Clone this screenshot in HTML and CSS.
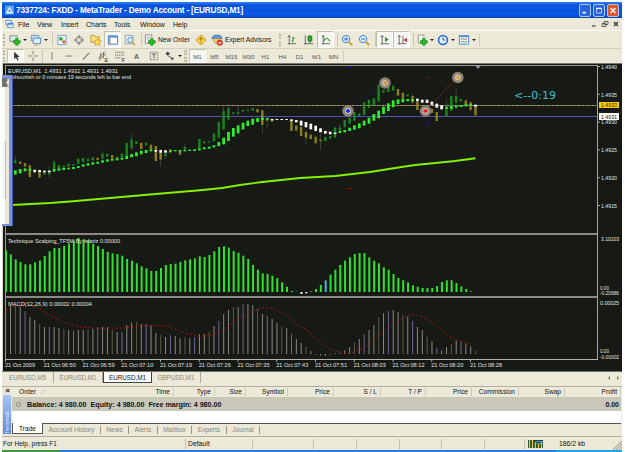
FILE: index.html
```html
<!DOCTYPE html>
<html lang="en">

<head>
    <meta charset="UTF-8">
    <title>MetaTrader</title>
    <link rel="stylesheet" href="styles.css">
</head>

<body>
    <div class="app">
        <div class="titlebar">
            <svg class="logo" viewBox="0 0 10 10"><rect width="10" height="10" fill="#5ba3e8"/><path d="M1 9L5 1l4 8z" fill="#eef6ff"/><path d="M3.5 7L5 4l1.5 3z" fill="#3b7fd0"/></svg>
            <span class="title">7337724: FXDD - MetaTrader - Demo Account - [EURUSD,M1]</span>
            <div class="win-buttons">
                <i class="wb"><svg viewBox="0 0 12 12"><path d="M3 8.5h4" stroke="#fff" stroke-width="2"/></svg></i>
                <i class="wb"><svg viewBox="0 0 12 12"><path d="M3 3.5h6v5.5H3z" fill="none" stroke="#cfe0ff"/><path d="M3 3.5h6" stroke="#fff" stroke-width="1.5"/></svg></i>
                <i class="wb close"><svg viewBox="0 0 12 12"><path d="M3 3l6 6M9 3l-6 6" stroke="#fff" stroke-width="1.6"/></svg></i>
            </div>
        </div>

        <div class="menubar">
            <svg class="menu-icon" viewBox="0 0 10 10"><path d="M1 1h6v5H1zM3 4h6v5H3z" fill="#fff" stroke="#4a8ad8"/><path d="M3 4.5h6" stroke="#4a8ad8" stroke-width="1.5"/></svg>
            <span class="m-file">File</span><span class="m-view">View</span><span class="m-insert">Insert</span><span class="m-charts">Charts</span><span class="m-tools">Tools</span><span class="m-window">Window</span><span>Help</span>
            <div class="mdi-buttons">
                <svg viewBox="0 0 8 8"><path d="M2 6h3.5" stroke="#444" stroke-width="1.3"/></svg>
                <svg viewBox="0 0 8 8"><path d="M3 1.5h4v3H3zM1 3.5h4v3H1z" fill="#ece9d8" stroke="#555" stroke-width=".9"/></svg>
                <svg viewBox="0 0 8 8"><path d="M2 2l4 4M6 2L2 6" stroke="#333" stroke-width="1.2"/></svg>
            </div>
        </div>

        <div class="toolbar main-tools">
            <i class="grip"></i>
            <div class="btn drop"><svg viewBox="0 0 13 13"><path d="M1 2h8v6H1z" fill="#dcebe0" stroke="#6b8f87"/><path d="M8.5 4.5v8M4.5 8.5h8" stroke="#169616" stroke-width="3.4"/><path d="M8.5 5.5v6M5.5 8.5h6" stroke="#31d531"/></svg><b></b></div>
            <div class="btn drop"><svg viewBox="0 0 13 13"><path d="M1.5 1.5h8v6h-8z" fill="#c9def5" stroke="#6b98c8"/><path d="M3.5 4.5h8v6h-8z" fill="#e2effc" stroke="#4f86c4"/><path d="M5 12h4" stroke="#d7a63c"/></svg><b></b></div>
            <i class="sep"></i>
            <div class="btn"><svg viewBox="0 0 13 13"><path d="M2 1.5h9v10H2z" fill="#eef6ff" stroke="#74a3cf"/><path d="M3.5 3.5H7V7H3.5z" fill="#22a822"/><path d="M7 7h3v3H7z" fill="#e0542a"/></svg></div>
            <div class="btn"><svg viewBox="0 0 13 13"><circle cx="6.5" cy="6.5" r="3.5" fill="none" stroke="#777"/><path d="M6.5 1v4M6.5 8v4M1 6.5h4M8 6.5h4" stroke="#666"/></svg></div>
            <div class="btn"><svg viewBox="0 0 13 13"><path d="M1 3V1.5h4l1 1.5h4v6H1z" fill="#f7df83" stroke="#c59a31"/><path d="M8 5l1.4 2.4 2.8.3-2 1.9.5 2.8L8 11l-2.4 1.4.5-2.8-2-1.9 2.7-.3z" fill="#ffe24d" stroke="#cc9a20" stroke-width=".8"/></svg></div>
            <div class="btn pressed"><svg viewBox="0 0 13 13"><path d="M1.5 2h10v9h-10z" fill="#fff" stroke="#3c76bb"/><path d="M2 3h9" stroke="#5a95d8" stroke-width="2"/><path d="M3 4v7" stroke="#d05050"/></svg></div>
            <div class="btn"><svg viewBox="0 0 13 13"><path d="M1.5 1.5h8v9h-8z" fill="#e8eef5" stroke="#8ca6c2"/><circle cx="7" cy="6.5" r="3" fill="#cfe7fa" stroke="#648bb5"/><path d="M9 9l3 3" stroke="#d1a53b" stroke-width="2"/></svg></div>
            <i class="sep"></i>
            <div class="btn order"><svg viewBox="0 0 13 13"><path d="M1.5 1h7v9h-7z" fill="#fff" stroke="#888"/><path d="M3 3.5h4M3 5.5h3" stroke="#999"/><path d="M8.5 4.5v8M4.5 8.5h8" stroke="#169616" stroke-width="3.4"/><path d="M8.5 5.5v6M5.5 8.5h6" stroke="#31d531"/></svg><span>New Order</span></div>
            <div class="btn"><svg viewBox="0 0 13 13"><path d="M6.5 1L12 6.5 6.5 12 1 6.5z" fill="#ffd84c" stroke="#cc951c"/><path d="M6.5 3.5v4M6.5 8.5v1.5M4.5 6l2-2 2 2" stroke="#8a5d06" fill="none"/></svg></div>
            <div class="btn experts"><svg viewBox="0 0 13 13"><path d="M1 5c0-5 11-5 11 0z" fill="#5b9ee0" stroke="#3572b4"/><path d="M3 5h7v3c-1 3-6 3-7 0z" fill="#f5cf72" stroke="#b1843a" stroke-width=".7"/><circle cx="9.5" cy="9.5" r="3.3" fill="#dd3428"/><path d="M8 9.5h3" stroke="#fff" stroke-width="1.4"/></svg><span>Expert Advisors</span></div>
            <i class="grip"></i>
            <div class="btn"><svg viewBox="0 0 13 13"><path d="M3.5 1.5v10M2 10.5h9M2 3.5l1.5-2L5 3.5" fill="none" stroke="#666"/><path d="M7.5 3v6M7.5 4.5h2M6 7.5h1.5" stroke="#228a22"/></svg></div>
            <div class="btn"><svg viewBox="0 0 13 13"><path d="M2.5 1.5v10M1 10.5h10" stroke="#666"/><path d="M7.5 1v9" stroke="#187318"/><path d="M5.5 2.5h4v5h-4z" fill="#2bb62b" stroke="#187318"/></svg></div>
            <div class="btn pressed"><svg viewBox="0 0 13 13"><path d="M3.5 1.5v10M2 10.5h9M2 3.5l1.5-2L5 3.5" fill="none" stroke="#666"/><path d="M4 8c2-5 4-4 7 0" fill="none" stroke="#2a9a2a" stroke-width="1.2"/></svg></div>
            <i class="sep"></i>
            <div class="btn"><svg viewBox="0 0 13 13"><circle cx="5.5" cy="5.5" r="4" fill="#dbefff" stroke="#3b7cc4"/><path d="M3.5 5.5h4M5.5 3.5v4" stroke="#2462b5"/><path d="M8.5 8.5L12 12" stroke="#cf9e2a" stroke-width="2.2"/></svg></div>
            <div class="btn"><svg viewBox="0 0 13 13"><circle cx="5.5" cy="5.5" r="4" fill="#dbefff" stroke="#3b7cc4"/><path d="M3.5 5.5h4" stroke="#2462b5"/><path d="M8.5 8.5L12 12" stroke="#cf9e2a" stroke-width="2.2"/></svg></div>
            <i class="sep"></i>
            <div class="btn pressed"><svg viewBox="0 0 13 13"><path d="M3.5 1.5v10M2 10.5h9M2 3.5l1.5-2L5 3.5" fill="none" stroke="#666"/><path d="M6.5 3l4 3-4 3z" fill="#2a9a2a"/></svg></div>
            <div class="btn pressed"><svg viewBox="0 0 13 13"><path d="M3.5 1.5v10M2 10.5h9M2 3.5l1.5-2L5 3.5M7.5 2v8" fill="none" stroke="#666"/><path d="M12 4L8 6.5 12 9z" fill="#c23b26"/></svg></div>
            <i class="sep"></i>
            <div class="btn drop"><svg viewBox="0 0 13 13"><path d="M2.5 1h6v9h-6z" fill="#f7f7f2" stroke="#999"/><path d="M8.5 4.5v8M4.5 8.5h8" stroke="#169616" stroke-width="3.4"/><path d="M8.5 5.5v6M5.5 8.5h6" stroke="#31d531"/></svg><b></b></div>
            <div class="btn drop"><svg viewBox="0 0 13 13"><circle cx="6.5" cy="6.5" r="4.8" fill="#e4f1ff" stroke="#2768c5" stroke-width="1.7"/><path d="M6.5 3.5v3h2.5" fill="none" stroke="#2a5390"/></svg><b></b></div>
            <div class="btn drop"><svg viewBox="0 0 13 13"><path d="M1.5 2h10v9h-10z" fill="#f6fbff" stroke="#4f8ccb"/><path d="M1 2.5h11" stroke="#4f8ccb" stroke-width="2"/><path d="M3 6l2-1 2 1 3-1" stroke="#c24848" fill="none"/><path d="M3 9l2-1 2 1 3-1" stroke="#3a9a3a" fill="none"/></svg><b></b></div>
            <i class="toolbar-end"></i>
        </div>

        <div class="toolbar line-tools">
            <i class="grip"></i>
            <div class="btn pressed"><svg viewBox="0 0 13 13"><path d="M4.5 2v8l2-2 1.5 3.5 1.2-.6L8 7.5h2.5z" fill="#333"/></svg></div>
            <div class="btn"><svg viewBox="0 0 13 13"><path d="M6.5 1v4M6.5 8v4M1 6.5h4M8 6.5h4" stroke="#777"/></svg></div>
            <i class="sep"></i>
            <div class="btn"><svg viewBox="0 0 13 13"><path d="M6.5 2.5v8" stroke="#777"/></svg></div>
            <div class="btn"><svg viewBox="0 0 13 13"><path d="M2.5 6.5h8" stroke="#777"/></svg></div>
            <div class="btn"><svg viewBox="0 0 13 13"><path d="M3 10.5L10 3" stroke="#777" stroke-width="1.2"/></svg></div>
            <div class="btn"><svg viewBox="0 0 13 13"><path d="M1 9l8-7M2 11l8-7M4 3v7M7 2v7" stroke="#666" stroke-width=".9"/><text x="8" y="12.5" font-size="6" fill="#222">E</text></svg></div>
            <div class="btn"><svg viewBox="0 0 13 13"><path d="M1 2.5h10M1 5.5h10M1 8.5h7" stroke="#666" stroke-dasharray="1.5 .7"/><text x="8.5" y="13" font-size="6" fill="#222">F</text></svg></div>
            <div class="btn"><span class="letter">A</span></div>
            <div class="btn"><svg viewBox="0 0 13 13"><path d="M2.5 2.5h8v8h-8z" fill="none" stroke="#777" stroke-dasharray="1.5 .7"/><path d="M4.5 4.5h4M6.5 4.5V9" stroke="#555"/></svg></div>
            <div class="btn drop"><svg viewBox="0 0 13 13"><path d="M1.5 4L4 1.5 6.5 4 4 6zM7 8.5h4L9 11.5z" fill="#444"/><path d="M4 6l5 3" stroke="#555"/></svg><b></b></div>
            <i class="toolbar-end"></i>
            <i class="grip"></i>
            <div class="btn period pressed">M1</div>
            <div class="btn period">M5</div>
            <div class="btn period">M15</div>
            <div class="btn period">M30</div>
            <div class="btn period">H1</div>
            <div class="btn period">H4</div>
            <div class="btn period">D1</div>
            <div class="btn period">W1</div>
            <div class="btn period">MN</div>
            <i class="toolbar-end"></i>
        </div>

        <div class="chart-wrap">
            <svg class="chart" id="chart" viewBox="2 63 620 308"></svg>
            <div class="side-window">
                <div class="side-body"><i class="side-close"></i><i class="side-list"></i></div>
            </div>
        </div>

        <div class="chart-tabs">
            <span class="ctab">EURUSD,M5</span><span class="ctab">EURUSD,M1</span><span class="ctab active">EURUSD,M1</span><span class="ctab">GBPUSD,M1</span>
            <div class="tab-arrows"><i class="left"></i><i class="right"></i></div>
        </div>

        <div class="terminal">
            <div class="terminal-side">
                <span class="terminal-close">×</span>
                <span class="terminal-name">Terminal</span>
            </div>
            <div class="terminal-main">
                <div class="cols header">
                    <span class="first">Order<em>∕</em></span><span>Time</span><span>Type</span><span>Size</span><span>Symbol</span><span>Price</span><span>S / L</span><span>T / P</span><span>Price</span><span>Commission</span><span>Swap</span><span>Profit</span>
                </div>
                <div class="balance">
                    <i class="dot"></i>
                    <span class="balance-text">Balance: 4 980.00&nbsp; Equity: 4 980.00&nbsp; Free margin: 4 980.00</span>
                    <span class="profit">0.00</span>
                </div>
                <div class="blank"></div>
                <div class="term-tabs">
                    <span class="ttab active">Trade</span><span class="ttab history">Account History</span><span class="ttab news">News</span><span class="ttab alerts">Alerts</span><span class="ttab mailbox">Mailbox</span><span class="ttab exp">Experts</span><span class="ttab journal">Journal</span>
                </div>
            </div>
        </div>

        <div class="statusbar">
            <span class="help">For Help, press F1</span>
            <span>Default</span>
            <span></span><span></span><span></span><span></span><span></span><span></span>
            <span class="traffic">
                <svg viewBox="0 0 15 8"><rect width="15" height="8" fill="#23452c"/><path d="M1.5 0v8M4.5 0v8M7.5 2v6M10.5 4v4M13.5 1v7" stroke="#d6cf53" stroke-width="1.3"/><path d="M8 1.5h7M9 3.5h4" stroke="#4f8fd5"/></svg>
                186/2 kb
            </span>
            <svg class="resize" viewBox="0 0 9 9"><path d="M0 9l9-9M3 9l6-6M6 9l3-3" stroke="#aaa797" stroke-width="1.2"/></svg>
        </div>
        <div class="taskbar"><i class="start"></i><i class="tray"></i></div>
    </div>

    <script src="chart.js"></script>
</body>

</html>
```

FILE: styles.css
```css
* {
    box-sizing: border-box;
}

body {
    margin: 0;
    padding: 2px 3px 0 2px;
    height: 452px;
    overflow: hidden;
    background-color: #fff;
    font-family: "Liberation Sans", Arial, sans-serif;
    font-size: 7px;
    color: #111;
}

i {
    display: block;
}

svg {
    display: block;
}

.app {
    width: 620px;
    height: 450px;
    display: flex;
    flex-direction: column;
    background-color: #ece9d8;
}

/* title */
.titlebar {
    height: 16px;
    display: flex;
    align-items: center;
    background: linear-gradient(#2f83f5, #0a52dc 20%, #0a58e4 80%, #0641b5);
    padding: 0 3px;
}

.logo {
    width: 9px;
    height: 10px;
}

.title {
    margin-left: 2px;
    color: #fff;
    font-size: 8.2px;
    font-weight: bold;
    letter-spacing: -0.16px;
    white-space: nowrap;
}

.win-buttons {
    margin-left: auto;
    display: flex;
    gap: 2px;
}

.wb {
    width: 12px;
    height: 13px;
    border: 1px solid #a9c6f7;
    border-radius: 2px;
    background-color: #2c63dd;
}

.wb.close {
    background-color: #df5528;
}

.wb svg {
    width: 10px;
    height: 11px;
}

/* menu */
.menubar {
    height: 13px;
    display: flex;
    align-items: center;
    padding-left: 3px;
    border-bottom: 1px solid #fbfaf5;
}

.menu-icon {
    width: 9px;
    height: 10px;
    margin-right: 4px;
}

.m-file {
    width: 19px;
}

.m-view {
    width: 24px;
}

.m-insert {
    width: 25px;
}

.m-charts {
    width: 28px;
}

.m-tools {
    width: 26px;
}

.m-window {
    width: 33px;
}

.mdi-buttons {
    margin-left: auto;
    display: flex;
    gap: 3px;
    padding-right: 2px;
}

.mdi-buttons svg {
    width: 8px;
    height: 8px;
}

/* toolbars */
.toolbar {
    display: flex;
    align-items: center;
    padding-left: 1px;
}

.main-tools {
    height: 17px;
}

.line-tools {
    height: 15px;
    border-top: 1px solid #d5d1bf;
}

.grip {
    width: 3px;
    height: 12px;
    margin-right: 1px;
    border-left: 2px dotted #bbb7a6;
}

.btn {
    width: 17px;
    height: 100%;
    display: flex;
    align-items: center;
    justify-content: center;
    white-space: nowrap;
}

.btn svg {
    width: 12px;
    height: 12px;
    flex: none;
}

.drop {
    width: 21px;
}

.drop b {
    margin-left: 2px;
    border: 2px solid transparent;
    border-top-color: #222;
    border-bottom: 0;
}

.pressed {
    background-color: #f7f6f0;
    border: 1px solid #c3bfae;
    border-right-color: #fff;
    border-bottom-color: #fff;
}

.sep {
    width: 4px;
    height: 13px;
    border-right: 1px solid #c9c5b4;
}

.order {
    width: 50px;
    justify-content: flex-start;
    padding-left: 2px;
}

.order span,
.experts span {
    margin-left: 2px;
}

.order span {
    font-size: 6.6px;
}

.experts {
    width: 66px;
    justify-content: flex-start;
    padding-left: 2px;
    margin-right: 4px;
    font-size: 6.7px;
}

.toolbar-end {
    width: 3px;
    height: 12px;
    border-right: 1px solid #d1cdbb;
}

.line-tools .sep,
.line-tools .toolbar-end {
    width: 2px;
}

.letter {
    font-weight: bold;
    color: #666;
}

.period {
    color: #555;
    font-size: 6.2px;
}

/* chart */
.chart-wrap {
    position: relative;
    height: 308px;
    background-color: #161914;
}

.chart {
    width: 620px;
    height: 308px;
    font-family: "Liberation Sans", Arial, sans-serif;
}

.side-window {
    position: absolute;
    left: 0;
    top: 12px;
    width: 11px;
    height: 151px;
    padding: 3px 3px 2px 0;
    background-color: #7c90e0;
    border-right: 1px solid #4255a6;
}

.side-body {
    height: 100%;
    background: linear-gradient(90deg, #fff 50%, #ece9d8 50%);
}

.side-close {
    height: 9px;
    background: #75706a;
    border-right: 2px solid #aaa59e;
    clip-path: polygon(0 0, 100% 0, 60% 50%, 100% 100%, 0 100%);
}

.side-list {
    width: 4px;
    height: 58px;
    margin-top: 54px;
    border-right: 1px solid #9fc0e0;
    background-color: #f1f5f6;
}

/* tabs under the chart */
.chart-tabs {
    height: 15px;
    display: flex;
    align-items: flex-start;
    border-top: 1px solid #77746a;
    color: #8a8779;
}

.ctab {
    width: 49px;
    height: 11px;
    line-height: 11px;
    text-align: center;
    font-size: 6.3px;
    border-right: 1px solid #aaa797;
}

.ctab:first-child {
    width: 52px;
}

.ctab.active {
    background-color: #fff;
    color: #111;
    border: 1px solid #444;
    border-top: 0;
}

.tab-arrows {
    margin-left: auto;
    display: flex;
    gap: 7px;
    padding: 4px 3px 0 0;
}

.tab-arrows i {
    border: 2px solid transparent;
}

.tab-arrows .left {
    border-right-color: #77746a;
    border-left: 0;
}

.tab-arrows .right {
    border-left-color: #77746a;
    border-right: 0;
}

/* terminal */
.terminal {
    height: 50px;
    display: flex;
    border-top: 1px solid #b4b09f;
}

.terminal-side {
    width: 10px;
    padding-left: 1px;
    display: flex;
    flex-direction: column;
}

.terminal-close {
    height: 8px;
    line-height: 7px;
    font-size: 8px;
    font-weight: bold;
    text-align: center;
}

.terminal-name {
    width: 8px;
    height: 39px;
    background: linear-gradient(#5c86d8, #a6c4f5);
    color: #e6effd;
    font-size: 6px;
    line-height: 8px;
    writing-mode: vertical-rl;
    transform: rotate(180deg);
    text-align: left;
}

.terminal-main {
    flex: 1;
    padding-right: 1px;
}

.cols {
    display: grid;
    grid-template-columns: 59px 103px 41px 31px 42px 46px 47px 45px 46px 47px 46px 56px;
}

.header {
    height: 11px;
    align-items: center;
    border-bottom: 1px solid #cbc7b5;
}

.header span {
    text-align: right;
    padding-right: 3px;
    border-right: 1px solid #cdc9b8;
    line-height: 8px;
    font-size: 6.6px;
    white-space: nowrap;
}

.header .first {
    text-align: left;
    padding-left: 7px;
    border-right: 0;
}

.header em {
    color: #999;
    margin-left: 7px;
}

.balance {
    height: 13px;
    display: flex;
    align-items: center;
    background-color: #c9c7ba;
    font-weight: bold;
    padding: 0 2px 0 4px;
}

.dot {
    width: 5px;
    height: 5px;
    border: 1px solid #8a8779;
    border-radius: 50%;
}

.balance-text {
    margin-left: 6px;
    font-size: 7.15px;
    white-space: nowrap;
}

.profit {
    margin-left: auto;
}

.blank {
    height: 12px;
    background-color: #fff;
}

.term-tabs {
    height: 12px;
    display: flex;
    border-top: 1px solid #555;
    color: #8a8779;
}

.ttab {
    height: 8px;
    margin-top: 2px;
    line-height: 8px;
    text-align: center;
    border-right: 1px solid #999686;
    font-size: 6.6px;
    white-space: nowrap;
}

.ttab.active {
    width: 31px;
    height: 11px;
    margin-top: -1px;
    line-height: 12px;
    background-color: #fff;
    color: #111;
    border: 1px solid #555;
    border-top: 0;
}

.history {
    width: 58px;
}

.news {
    width: 28px;
}

.alerts {
    width: 29px;
}

.mailbox {
    width: 34px;
}

.exp {
    width: 35px;
}

.journal {
    width: 33px;
}

/* status */
.statusbar {
    height: 14px;
    display: grid;
    grid-template-columns: 184px 67px 61px 43px 43px 42px 43px 40px 1fr 9px;
    align-items: center;
    border-top: 1px solid #b4b09f;
}

.statusbar span {
    height: 10px;
    line-height: 10px;
    padding-left: 2px;
    border-right: 1px solid #c5c1b0;
    white-space: nowrap;
    font-size: 6.8px;
}

.statusbar .help {
    padding-left: 1px;
    font-size: 6.5px;
}

.statusbar .traffic {
    display: flex;
    align-items: center;
    gap: 16px;
    border-right: 0;
    padding-left: 3px;
}

.traffic svg {
    width: 15px;
    height: 8px;
}

.resize {
    width: 9px;
    height: 9px;
    align-self: end;
}

.taskbar {
    height: 2px;
    display: flex;
    justify-content: space-between;
    background-color: #2f7be6;
}

.start {
    width: 57px;
    background-color: #43983f;
}

.tray {
    width: 66px;
    background-color: #18a5ee;
}
```

FILE: chart.js
```javascript
const chart = document.getElementById('chart');
const STEP = 4.844;
let out = '';

function rect(x, y, w, h, fill) {
    out += `<rect x="${x.toFixed(2)}" y="${y.toFixed(2)}" width="${w}" height="${h.toFixed(2)}" fill="${fill}"/>`;
}

function line(x1, y1, x2, y2, color, extra = '') {
    out += `<line x1="${x1}" y1="${y1}" x2="${x2}" y2="${y2}" stroke="${color}" ${extra}/>`;
}

function text(x, y, str, len, color = '#e4e4e4', size = 6) {
    out += `<text x="${x}" y="${y}" font-size="${size}" fill="${color}" textLength="${len}" lengthAdjust="spacingAndGlyphs">${str}</text>`;
}

// panels
rect(2, 63, 620, 308, '#161914');
rect(2, 63, 1, 308, '#d8d5c6');
rect(3, 63, 619, 1, '#77766f');
rect(5, 65, 593, 1, '#9a9a94');
rect(5, 233, 593, 2, '#8b8984');
rect(5, 296, 593, 2, '#8b8984');
rect(5, 65, 1, 294, '#9a9a94');
rect(597, 65, 1, 294, '#a5a5a0');
rect(5, 359, 593, 1, '#b5b5b0');

// bid and ask
line(12, 105.5, 597, 105.5, '#a3966a', 'stroke-dasharray="2 .5"');
line(12, 116.5, 597, 116.5, '#5252b4');

// candles: index, top, bottom (thirds of a pixel from y=62), 1 = bullish
const candles = [
    [0, 295, 303, 1], [1, 299, 306, 0], [2, 303, 314, 0], [3, 310, 345, 0], [4, 322, 330, 0], [5, 326, 346, 0],
    [6, 332, 338, 1], [7, 333, 337, 1], [8, 300, 321, 1], [9, 309, 318, 1], [10, 311, 317, 1], [11, 305, 313, 1],
    [12, 306, 311, 1], [13, 290, 306, 1], [14, 288, 300, 1], [15, 290, 298, 1], [16, 286, 295, 1], [17, 287, 294, 0],
    [18, 275, 290, 1], [19, 275, 284, 1], [20, 279, 290, 0], [21, 285, 289, 0], [22, 275, 285, 1], [23, 243, 286, 1],
    [24, 232, 259, 1], [25, 238, 246, 1], [26, 243, 261, 0], [27, 242, 250, 1], [28, 248, 262, 0], [29, 252, 297, 0],
    [30, 270, 293, 0], [31, 274, 282, 1], [32, 262, 272, 0], [34, 265, 278, 0], [35, 255, 263, 1], [38, 231, 261, 1],
    [39, 238, 244, 1], [40, 238, 242, 1], [41, 214, 238, 1], [42, 180, 227, 1], [43, 147, 202, 1], [44, 139, 173, 1],
    [45, 151, 156, 1], [46, 150, 155, 1], [47, 144, 149, 1], [48, 143, 147, 1], [49, 138, 146, 1], [50, 141, 151, 0],
    [51, 145, 189, 0], [52, 172, 176, 0], [53, 174, 179, 0], [57, 178, 207, 0], [58, 190, 206, 0], [59, 195, 222, 0],
    [60, 210, 227, 0], [61, 218, 231, 0], [62, 224, 244, 0], [63, 233, 238, 0], [64, 225, 237, 1], [65, 222, 230, 1],
    [66, 196, 227, 1], [67, 196, 206, 1], [68, 174, 196, 1], [69, 167, 185, 1], [70, 150, 176, 1], [71, 154, 162, 1],
    [72, 121, 159, 1], [73, 113, 138, 1], [74, 109, 130, 1], [75, 68, 118, 1], [76, 84, 92, 1], [77, 68, 90, 1],
    [78, 71, 86, 1], [79, 81, 101, 0], [80, 92, 112, 0], [81, 97, 103, 1], [82, 102, 122, 0], [83, 120, 144, 0],
    [85, 130, 153, 0], [86, 140, 153, 0], [87, 150, 177, 0], [89, 142, 163, 1], [90, 102, 146, 1], [91, 102, 122, 1],
    [92, 111, 118, 1], [93, 115, 131, 0], [94, 121, 144, 0], [95, 134, 160, 0]
];
const wicks = {
    0: [283, 305], 5: [322, 348], 7: [312, 347], 8: [294, 328], 18: [267, 298], 24: [216, 264], 30: [262, 314],
    31: [262, 290], 35: [245, 268], 43: [135, 204], 44: [131, 174], 46: [133, 164], 51: [143, 215], 52: [165, 197],
    60: [205, 246], 63: [216, 264], 67: [184, 215], 82: [95, 123], 89: [114, 164], 91: [81, 123], 94: [117, 148]
};
for (const i in wicks) {
    const [a, b] = wicks[i];
    rect(14.9 + STEP * i, 62 + a / 3, 0.8, (b - a) / 3, '#4a4c42');
}
candles.forEach(([i, a, b, up]) => {
    rect(14.1 + STEP * i, 62 + a / 3, 2.4, (b - a) / 3, up ? '#1a861d' : '#8c7f22');
});

// moving average ribbon: top, bottom pairs
const ribbon = [
    325, 338, 321, 334, 319, 328, 321, 326, 324, 331, 324, 330, 326, 331, 326, 331, 321, 329, 319, 326, 318, 324,
    317, 322, 315, 321, 312, 318, 307, 314, 304, 311, 301, 308, 299, 305, 295, 302, 292, 299, 291, 296, 289, 295,
    287, 293, 282, 291, 276, 286, 271, 283, 266, 277, 264, 273, 262, 268, 264, 269, 264, 272, 265, 272, 265, 270,
    264, 268, 264, 268, 264, 268, 263, 267, 262, 267, 260, 265, 256, 262, 254, 260, 250, 256, 240, 252, 227, 247,
    210, 237, 198, 224, 190, 214, 182, 202, 176, 192, 170, 188, 168, 180, 167, 174, 168, 173, 171, 175, 171, 174,
    171, 174, 171, 174, 172, 178, 174, 181, 176, 191, 180, 196, 185, 202, 191, 207, 199, 211, 207, 215, 209, 217,
    212, 216, 207, 213, 204, 211, 197, 207, 190, 203, 184, 199, 176, 191, 167, 185, 156, 176, 146, 169, 134, 156,
    124, 147, 115, 136, 112, 126, 111, 121, 111, 118, 111, 117, 110, 118, 113, 122, 113, 123, 119, 130, 125, 137,
    130, 142, 134, 141, 132, 140, 131, 137, 129, 135, 127, 133, 126, 131, 128, 134
];
const isWhite = i => (i > 3 && i < 8) || (i > 28 && i < 32) || (i > 52 && i < 67) || (i > 82 && i < 89) || i === 95;
for (let i = 0; i < 96; i++) {
    const a = ribbon[i * 2];
    const b = ribbon[i * 2 + 1];
    rect(14 + STEP * i, 62 + a / 3, 2.7, (b - a) / 3, isWhite(i) ? '#fff' : '#2cf02c');
}

// slow average
out += '<polyline points="12,205 50,203 70,201.5 110,198 150,194.5 200,190.3 222,188 240,185 260,182.3 300,178 335,176 370,172 400,167.3 415,165 433,163.2 455,161 475.5,158.3" fill="none" stroke="#85f000" stroke-width="1.9"/>';

// trades
line(350, 110, 385, 83, '#2020c0', 'stroke-dasharray="1 3"');
line(426, 111, 457, 77, '#a02828', 'stroke-dasharray="2 1.5"');
rect(348, 66, 4, 1, '#1010b0');
rect(348, 188, 4, 1, '#a00c0c');
rect(425, 77, 4, 1, '#6c1616');
rect(425, 122, 4, 1, '#1010b0');
[[348, 111, '#1734ec'], [385, 83, '#e08a20'], [425.5, 111, '#ed1b1b'], [457.8, 77.5, '#e8a420']].forEach(([x, y, c], n) => {
    out += `<circle cx="${x}" cy="${y}" r="5.8" fill="#8d8278"/><circle cx="${x}" cy="${y}" r="3" fill="#cbc1b5"/>`;
    if (n % 2) {
        out += `<path d="M${x - 2.3} ${y}l4-2.5v5z" fill="${c}"/>`;
    } else {
        out += `<path d="M${x - 2} ${y}h4M${x} ${y - 2}v4" stroke="${c}" stroke-width="1.8"/>`;
    }
});
out += '<path d="M475.5 66h5l-2.5 3z" fill="#8894a0"/>';

// captions
text(8, 72.5, 'EURUSD,M1&#160; 1.4931 1.4932 1.4931 1.4931', 110);
text(12, 79, 'shourtish or 0 minutes 19 seconds left to bar end', 119);
out += '<text x="514" y="99" font-size="10.5" fill="#3cc0d2" font-family="DejaVu Sans, sans-serif" textLength="42" lengthAdjust="spacingAndGlyphs">&lt;--0:19</text>';

// price axis
['1.4940', '1.4935', '1.4930', '1.4925', '1.4920', '1.4915'].forEach((p, n) => {
    const y = 66.5 + n * 27.8;
    rect(598, y - 0.5, 2, 1, '#a5a5a0');
    text(601, y + 2.2, p, 16);
});
rect(599, 102, 20, 6, '#f4c90c');
text(601, 107.2, '1.4933', 16, '#3c3000');
rect(599, 113, 20, 7, '#fff');
text(601, 118.7, '1.4931', 16, '#111');

// Technique Scalping, base at 180 thirds from y=232
const scalping = [
    55, 67, 82, 90, 97, 97, 91, 86, 72, 58, 48, 48, 42, 35, 26, 18, 23, 25, 35, 42, 51, 60, 64, 66, 71, 81, 86, 94,
    103, 109, 117, 117, 108, 99, 96, 95, 90, 85, 82, 79, 73, 75, 69, 58, 45, 43, 47, 57, 62, 71, 81, 99, 113, 124,
    126, 131, 138, 151, 164, 177, 179, 186, 184, 178, 171, 159, 145, 128, 113, 99, 86, 76, 66, 63, 63, 76, 86, 94,
    106, 113, 126, 138, 145, 151, 160, 164, 168, 168, 168, 162, 150, 145, 145, 153, 163, 171, 178
];
scalping.forEach((v, j) => {
    const x = 5 + STEP * j;
    if (v > 180) {
        rect(x, 292, 2, (v - 180) / 3, '#fff');
        return;
    }
    rect(x, 232 + v / 3, 2, (180 - v) / 3, j === 66 ? '#4bb5d5' : '#30e130');
});
text(8, 243, 'Technique Scalping_TF5M By fsfariz 0.00000', 112);
text(601, 241, '3.10103', 18);
text(600, 289.5, '0.00', 9, '#e4e4e4', 5);
text(600, 295.3, '-0.20986', 19, '#e4e4e4', 5);

// MACD, base at 174 thirds from y=296
const macd = [
    36, 30, 28, 32, 45, 63, 72, 84, 93, 93, 93, 96, 99, 102, 104, 102, 102, 100, 98, 94, 93, 93, 102, 108, 108, 87,
    80, 78, 84, 84, 88, 111, 117, 123, 117, 120, 127, 125, 127, 123, 115, 114, 108, 90, 75, 54, 42, 33, 33, 25, 24,
    27, 38, 54, 60, 69, 80, 91, 96, 114, 129, 141, 151, 165, 177, 179, 180, 179, 171, 170, 163, 153, 139, 129, 115,
    102, 87, 63, 52, 45, 42, 48, 57, 62, 75, 93, 102, 121, 136, 156, 163, 153, 144, 134, 136, 143, 151, 163
];
const tints = ['#8a8a84', '#8a8a84', '#8a8a84', '#6c6896', '#5c5b4a'];
macd.forEach((v, j) => {
    rect(5.2 + STEP * j, 296 + Math.min(v, 174) / 3, 1, Math.abs(174 - v) / 3, tints[j * 7 % 5]);
});
const signal = [
    [5.7, 310], [10.7, 307.3], [15, 305.3], [25, 304.8], [34, 306.5], [40, 309.3], [48, 314.3], [57, 319], [67, 323.3],
    [80, 327], [97, 328.3], [125, 328], [133, 326.7], [147, 325.3], [167, 326.3], [177, 330], [187, 333.7], [200, 336.3],
    [213, 335.3], [222, 331], [230, 325.3], [240, 318.7], [250, 312.7], [260, 308.3], [267, 307.3], [277, 309.7],
    [287, 316], [300, 326.7], [307, 330], [318, 340.7], [330, 349], [340, 352.3], [353, 352.3], [365, 347.7],
    [377, 337.7], [388, 327.7], [397, 321.3], [405, 316.7], [413, 314.3], [422, 316.7], [430, 320.7], [438, 326.7],
    [448, 335.3], [458, 340.7], [472, 344.7]
];
out += `<polyline points="${signal.join(' ')}" fill="none" stroke="#c01414" stroke-width="1" stroke-dasharray="1.6 2.4"/>`;
text(8, 306, 'MACD(12,26,9) 0.00002 0.00004', 84);
text(600, 304.5, '0.00025', 19);
text(600, 353, '0.00', 9, '#e4e4e4', 5);
text(600, 358.8, '-0.00002', 19, '#e4e4e4', 5);

// time axis
['21 Oct 2009', '21 Oct 06:50', '21 Oct 06:59', '21 Oct 07:10', '21 Oct 07:19', '21 Oct 07:26', '21 Oct 07:35',
    '21 Oct 07:43', '21 Oct 07:51', '21 Oct 08:03', '21 Oct 08:12', '21 Oct 08:20', '21 Oct 08:28'].forEach((t, n) => {
    const x = 5 + n * 38.75;
    rect(x, 360, 1, 2, '#a5a5a0');
    text(x, 367.3, t, n ? 32 : 30);
});

chart.innerHTML = out;
```
